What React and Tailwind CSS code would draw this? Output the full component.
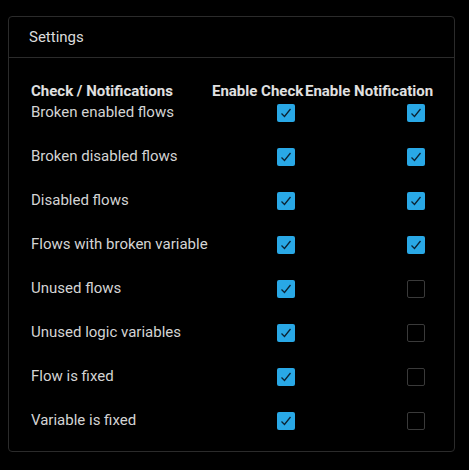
import React from "react";

const rows = [
  ["Broken enabled flows", true, true],
  ["Broken disabled flows", true, true],
  ["Disabled flows", true, true],
  ["Flows with broken variable", true, true],
  ["Unused flows", true, false],
  ["Unused logic variables", true, false],
  ["Flow is fixed", true, false],
  ["Variable is fixed", true, false],
];

function Box({ on }) {
  if (on)
    return (
      <div className="w-[18px] h-[18px] rounded-[2px] bg-[#29a8e6] flex items-center justify-center">
        <svg width="12" height="12" viewBox="0 0 12 12" fill="none">
          <path d="M1.5 6.5 L4.5 9.5 L10.5 2" stroke="#0b2233" strokeWidth="1.3" />
        </svg>
      </div>
    );
  return <div className="w-[18px] h-[18px] rounded-[2px] border border-[#3a3a3a]" />;
}

export default function App() {
  return (
    <div className="w-[469px] h-[470px] bg-black pt-[16px] pl-[8px]" style={{ fontFamily: "Roboto, 'Liberation Sans', sans-serif" }}>
      <div className="w-[447px] h-[436px] border border-[#2b2b2b] rounded-[4px]">
        <div className="h-[41px] border-b border-[#2b2b2b] pl-[20px] flex items-center text-[15px] text-[#dcdcdc]">
          Settings
        </div>
        <div className="pl-[22px] pt-[22px] grid grid-cols-[178px_90px_127px] gap-x-[3px] text-[15px]">
          <div className="h-[22px] flex items-center font-bold text-[#e0e0e0] whitespace-nowrap">Check / Notifications</div>
          <div className="h-[22px] flex items-center font-bold text-[#e0e0e0] whitespace-nowrap">Enable Check</div>
          <div className="h-[22px] flex items-center font-bold text-[#e0e0e0] whitespace-nowrap">Enable Notification</div>
          {rows.map(([label, a, b]) => (
            <React.Fragment key={label}>
              <div className="h-[44px] text-[#d4d4d4] leading-[20px] whitespace-nowrap">{label}</div>
              <div className="h-[44px] flex justify-end pr-[7px] pt-[2px]"><Box on={a} /></div>
              <div className="h-[44px] flex justify-end pr-[7px] pt-[2px]"><Box on={b} /></div>
            </React.Fragment>
          ))}
        </div>
      </div>
    </div>
  );
}
